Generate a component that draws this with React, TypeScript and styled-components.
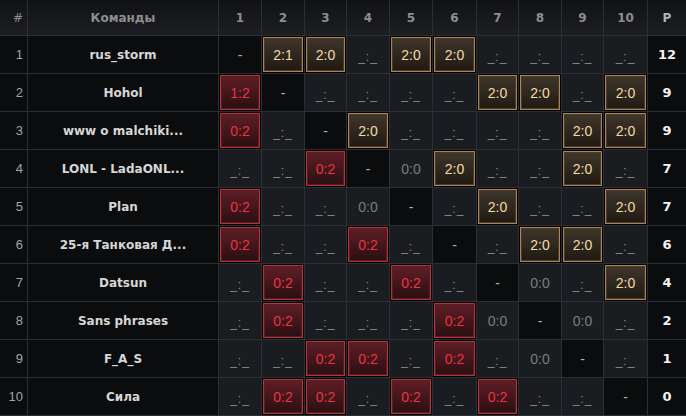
import styled, { createGlobalStyle, css } from "styled-components"

type ResultKind = "win" | "loss" | "draw" | "empty" | "self"

type TeamRow = {
  name: string
  results: string[]
  points: number
}

const GlobalStyle = createGlobalStyle`
  html, body {
    margin: 0;
    padding: 0;
    background: #0b0c0e;
  }
  body {
    font-family: "Liberation Sans", Arial, sans-serif;
  }
`

const teams: TeamRow[] = [
  { name: "rus_storm", results: ["-", "2:1", "2:0", "", "2:0", "2:0", "", "", "", ""], points: 12 },
  { name: "Hohol", results: ["1:2", "-", "", "", "", "", "2:0", "2:0", "", "2:0"], points: 9 },
  { name: "www o malchiki...", results: ["0:2", "", "-", "2:0", "", "", "", "", "2:0", "2:0"], points: 9 },
  { name: "LONL - LadaONL...", results: ["", "", "0:2", "-", "0:0", "2:0", "", "", "2:0", ""], points: 7 },
  { name: "Plan", results: ["0:2", "", "", "0:0", "-", "", "2:0", "", "", "2:0"], points: 7 },
  { name: "25-я Танковая Д...", results: ["0:2", "", "", "0:2", "", "-", "", "2:0", "2:0", ""], points: 6 },
  { name: "Datsun", results: ["", "0:2", "", "", "0:2", "", "-", "0:0", "", "2:0"], points: 4 },
  { name: "Sans phrases", results: ["", "0:2", "", "", "", "0:2", "0:0", "-", "0:0", ""], points: 2 },
  { name: "F_A_S", results: ["", "", "0:2", "0:2", "", "0:2", "", "0:0", "-", ""], points: 1 },
  { name: "Сила", results: ["", "0:2", "0:2", "", "0:2", "", "0:2", "", "", "-"], points: 0 },
]

const kindOf = (r: string): ResultKind => {
  if (r === "-") return "self"
  if (r === "") return "empty"
  if (r === "0:0") return "draw"
  const [a, b] = r.split(":").map(Number)
  return a > b ? "win" : "loss"
}

export default function App() {
  return (
    <>
      <GlobalStyle />
      <Table>
        <HeadCell $align="right">#</HeadCell>
        <HeadCell>Команды</HeadCell>
        {teams.map((_, i) => (
          <HeadCell key={i}>{i + 1}</HeadCell>
        ))}
        <HeadCell $light>P</HeadCell>

        {teams.map((team, row) => (
          <Row key={team.name} team={team} index={row} />
        ))}
      </Table>
    </>
  )
}

const Row = ({ team, index }: { team: TeamRow; index: number }) => (
  <>
    <NumCell>{index + 1}</NumCell>
    <NameCell>{team.name}</NameCell>
    {team.results.map((r, i) => {
      const kind = kindOf(r)
      return (
        <ResultCell key={i} $kind={kind}>
          {kind === "win" || kind === "loss" ? (
            <Badge $kind={kind}>{r}</Badge>
          ) : kind === "empty" ? (
            <Pending>_:_</Pending>
          ) : (
            <Plain $kind={kind}>{r}</Plain>
          )}
        </ResultCell>
      )
    })}
    <PointsCell>{team.points}</PointsCell>
  </>
)

const checker = (a: string, b: string) => css`
  background-color: ${a};
  background-image: repeating-conic-gradient(${a} 0 25%, ${b} 0 50%);
  background-size: 2px 2px;
`

const Table = styled.div`
  display: grid;
  grid-template-columns: 27px 190px 42px 42px 41px 42px 42px 43px 41px 42px 41px 43px 38px;
  grid-template-rows: 35px repeat(10, 37px);
  gap: 1px;
  padding-bottom: 1px;
  width: 686px;
  background: #2a2e35;
`

const HeadCell = styled.div<{ $align?: "right"; $light?: boolean }>`
  display: flex;
  align-items: center;
  justify-content: ${(p) => (p.$align === "right" ? "flex-end" : "center")};
  padding-right: ${(p) => (p.$align === "right" ? "4px" : "0")};
  background: linear-gradient(#111215, #1c1e22);
  color: ${(p) => (p.$light ? "#b4b4b4" : "#8e8e8e")};
  font-family: "DejaVu Sans", sans-serif;
  font-size: 12px;
  font-weight: ${(p) => (p.$align === "right" ? 400 : 700)};
`

const NumCell = styled.div`
  display: flex;
  align-items: center;
  justify-content: flex-end;
  padding-right: 4px;
  background: #0b0c0e;
  color: #a4a4a4;
  font-size: 13px;
`

const NameCell = styled.div`
  display: flex;
  align-items: center;
  justify-content: center;
  background: #0b0c0e;
  color: #d6d6d6;
  font-family: "DejaVu Sans", sans-serif;
  font-size: 12px;
  font-weight: 700;
  white-space: nowrap;
  overflow: hidden;
`

const ResultCell = styled.div<{ $kind: ResultKind }>`
  display: flex;
  align-items: stretch;
  justify-content: stretch;
  padding: 1px;
  ${(p) => (p.$kind === "self" ? css`background: #0b0c0e;` : checker("#1d2025", "#16181c"))}
`

const Centered = styled.div`
  flex: 1;
  display: flex;
  align-items: center;
  justify-content: center;
  font-size: 14px;
`

const Badge = styled(Centered)<{ $kind: ResultKind }>`
  ${(p) =>
    p.$kind === "win"
      ? css`
          border: 1px solid #a98459;
          box-shadow: 0 0 0 1px #000, inset 0 0 0 1px #4a3a28;
          color: #f3dba6;
          background:
            repeating-conic-gradient(rgba(255, 255, 255, 0.04) 0 25%, transparent 0 50%) 0 0 / 2px 2px,
            linear-gradient(#3b3226, #1b150f);
        `
      : css`
          border: 1px solid #b0343d;
          box-shadow: 0 0 0 1px #000, inset 0 0 0 1px #5a1c22;
          color: #ea3441;
          background:
            repeating-conic-gradient(rgba(255, 255, 255, 0.04) 0 25%, transparent 0 50%) 0 0 / 2px 2px,
            linear-gradient(#5c1a21, #250a0d);
        `}
`

const Pending = styled(Centered)`
  color: #8c8c8c;
  font-size: 12px;
  letter-spacing: 1px;
  padding-top: 4px;
`

const Plain = styled(Centered)<{ $kind: ResultKind }>`
  color: ${(p) => (p.$kind === "self" ? "#b0b0b0" : "#7c7c7c")};
`

const PointsCell = styled.div`
  display: flex;
  align-items: center;
  justify-content: center;
  background: #0b0c0e;
  color: #f4f4f4;
  font-family: "DejaVu Sans", sans-serif;
  font-size: 13px;
  font-weight: 700;
`
